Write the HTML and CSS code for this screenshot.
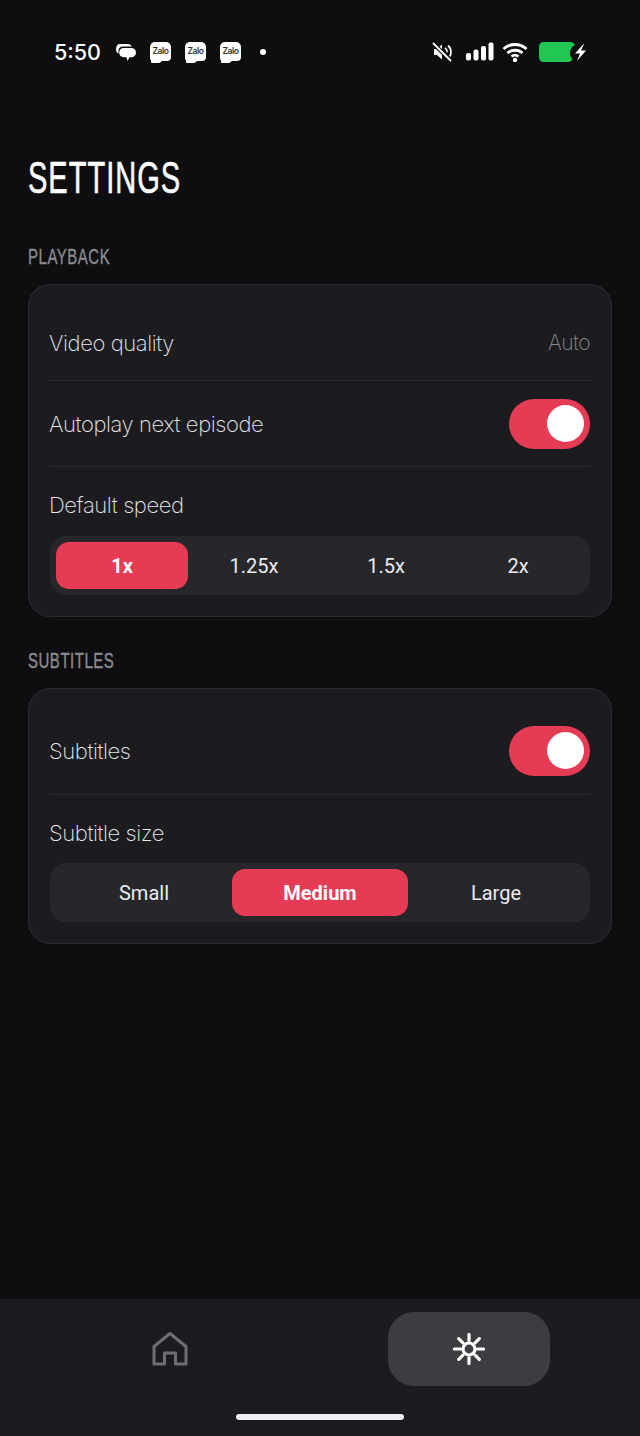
FILE: index.html
```html
<!DOCTYPE html>
<html lang="en">
<head>
    <meta charset="UTF-8">
    <meta name="viewport" content="width=device-width, initial-scale=1.0">
    <title>Settings</title>
    <link rel="stylesheet" href="styles.css">
</head>
<body>
    <div class="status-bar">
        <div class="status-left">
            <span class="clock">5:50</span>
            <svg class="msg-icon" width="22" height="22" viewBox="0 0 22 22">
                <path d="M5 3h7c2.500 0 4 .8 4.800 2.500H8C5 5.500 3.500 7.300 3.500 9.500v3.200C2 11.800 1 10.300 1 8.500 1 5 2.500 3 5 3z" fill="#fff"/>
                <path d="M9 7h7c3 0 5 1.800 5 4.500 0 3-2 4.700-5 4.700h-1.500L12.500 20l-1-3.800H9c-3 0-4.800-1.800-4.800-4.700C4.200 8.800 6 7 9 7z" fill="#fff"/>
            </svg>
            <span class="zalo">Zalo</span>
            <span class="zalo">Zalo</span>
            <span class="zalo">Zalo</span>
            <span class="dot"></span>
        </div>
        <div class="status-right">
            <svg width="22" height="22" viewBox="0 0 22 22">
                <path d="M3 8h3l5-4.500v15L6 14H3z" fill="#fff"/>
                <path d="M14 7c1.500 1 2.300 2.500 2.300 4.200M17 4.500c2 1.700 3 4 3 6.700 0 1.500-.4 3-1.200 4.300" fill="none" stroke="#fff" stroke-width="1.700"/>
                <path d="M2 2l18 18" stroke="#0e0e10" stroke-width="4"/>
                <path d="M2.500 2.500l17 17" stroke="#fff" stroke-width="1.800" stroke-linecap="round"/>
            </svg>
            <svg class="signal" width="28" height="20" viewBox="0 0 28 20">
                <rect x="0" y="11" width="5" height="7.500" rx="2" fill="#fff"/>
                <rect x="7.500" y="7.500" width="5" height="11" rx="2" fill="#fff"/>
                <rect x="15" y="4" width="5" height="14.500" rx="2" fill="#fff"/>
                <rect x="22.500" y="0.500" width="5" height="18" rx="2" fill="#fff"/>
            </svg>
            <svg class="wifi" width="26" height="20" viewBox="0 0 26 20">
                <path d="M1.500 7C8 1 18 1 24.500 7M5.500 11c4.200-3.700 10.800-3.700 15 0M9.500 14.500c2-1.600 5-1.600 7 0" fill="none" stroke="#fff" stroke-width="2.800"/>
                <circle cx="13" cy="18" r="2.200" fill="#fff"/>
            </svg>
            <svg class="battery" width="50" height="24" viewBox="0 0 50 24">
                <path d="M7 2h26c2.800 0 4.800 1.500 5 3-3 1.500-4.500 4-5 7-.4 3 .5 5 2.500 7-1 2-2.500 3-4.500 3H7c-3 0-5-2-5-5V7c0-3 2-5 5-5z" fill="#22c653"/>
                <path d="M47.500 3L38 13.500h5L40 21l9-10.500h-5z" fill="#fff"/>
            </svg>
        </div>
    </div>

    <main class="content">
        <h1>SETTINGS</h1>

        <h2 class="section-title">PLAYBACK</h2>
        <section class="card">
            <div class="row row-quality">
                <span class="row-label">Video quality</span>
                <span class="row-value">Auto</span>
            </div>
            <div class="row row-autoplay">
                <span class="row-label">Autoplay next episode</span>
                <span class="toggle"><span class="knob"></span></span>
            </div>
            <div class="picker">
                <span class="picker-label">Default speed</span>
                <div class="segments">
                    <span class="segment active">1x</span>
                    <span class="segment">1.25x</span>
                    <span class="segment">1.5x</span>
                    <span class="segment">2x</span>
                </div>
            </div>
        </section>

        <h2 class="section-title">SUBTITLES</h2>
        <section class="card">
            <div class="row row-subtitles">
                <span class="row-label">Subtitles</span>
                <span class="toggle"><span class="knob"></span></span>
            </div>
            <div class="picker">
                <span class="picker-label">Subtitle size</span>
                <div class="segments">
                    <span class="segment">Small</span>
                    <span class="segment active">Medium</span>
                    <span class="segment">Large</span>
                </div>
            </div>
        </section>
    </main>

    <nav class="tab-bar">
        <div class="tabs">
            <div class="tab">
                <svg width="38" height="36" viewBox="0 0 38 36">
                    <path d="M3 15.500L19 2.500l16 13V33H24.500V22h-11v11H3z" fill="none" stroke="#6e6e72" stroke-width="3" stroke-linejoin="round"/>
                </svg>
            </div>
            <div class="tab tab-active">
                <svg class="sun" width="32" height="32" viewBox="0 0 32 32">
                    <circle cx="16" cy="16" r="6" fill="none" stroke="#fff" stroke-width="3.200"/>
                    <path d="M16 1.500v6M16 24.500v6M1.500 16h6M24.500 16h6M5.700 5.700l4.200 4.200M22.100 22.100l4.200 4.200M5.700 26.300l4.200-4.200M22.100 9.900l4.200-4.200" stroke="#fff" stroke-width="3.200" stroke-linecap="round"/>
                </svg>
            </div>
        </div>
        <div class="home-indicator"></div>
    </nav>
</body>
</html>
```

FILE: styles.css
```css
* {
    box-sizing: border-box;
}

body {
    margin: 0;
    height: 1436px;
    display: flex;
    flex-direction: column;
    background-color: #0e0e10;
    color: #fff;
    font-family: 'Inter', sans-serif;
    overflow: hidden;
}

/* status bar */
.status-bar {
    height: 104px;
    padding: 0 54px 0 54px;
    display: flex;
    justify-content: space-between;
    align-items: center;
}

.status-left {
    display: flex;
    align-items: center;
}

.clock {
    font-size: 21.500px;
    font-weight: 500;
    width: 61px;
}

.msg-icon {
    margin-right: 13px;
}

.zalo {
    position: relative;
    width: 21px;
    height: 19px;
    margin-right: 14px;
    margin-top: -2px;
    border-radius: 5px 5px 4px 3px;
    background: #fff;
    color: #333;
    font-size: 8.500px;
    font-weight: 600;
    line-height: 18px;
    text-align: center;
    letter-spacing: -0.4px;
}

/* speech tail under each app badge */
.zalo::after {
    content: "";
    position: absolute;
    left: 1px;
    bottom: -2px;
    width: 11px;
    height: 4px;
    border-radius: 0 0 8px 2px;
    background: #fff;
}

.dot {
    width: 6px;
    height: 6px;
    margin-left: 5px;
    border-radius: 50%;
    background: #fff;
}

.status-right {
    display: flex;
    align-items: center;
}

.signal {
    margin-left: 13px;
}

.wifi {
    margin-left: 8px;
}

.battery {
    margin-left: 9px;
    margin-right: -1px;
}

/* page content */
.content {
    flex: 1;
    padding: 0 28px;
}

/* squeezed to the condensed look of the headings */
h1 {
    margin: 48px 0 0;
    font-family: 'Liberation Sans', sans-serif;
    font-size: 44px;
    font-weight: 400;
    line-height: 52px;
    letter-spacing: 1.5px;
    -webkit-text-stroke: 0.6px #fff;
    transform: scaleX(0.66);
    transform-origin: left center;
}

.section-title {
    margin: 0 0 15px;
    height: 24px;
    font-family: 'Liberation Sans', sans-serif;
    font-size: 22px;
    font-weight: 400;
    line-height: 24px;
    letter-spacing: 0.8px;
    color: #8b8b8f;
    -webkit-text-stroke: 0.4px #8b8b8f;
    transform: scaleX(0.68);
    transform-origin: left center;
}

h1 + .section-title {
    margin-top: 41px;
}

.card {
    margin-bottom: 32px;
    padding: 0 21px 21px;
    border: 1px solid #2c2c30;
    border-radius: 22px;
    background: #1c1c20;
}

.row {
    display: flex;
    justify-content: space-between;
    align-items: center;
    border-bottom: 1px solid #2c2c30;
    font-size: 22px;
    font-weight: 250;
    letter-spacing: -0.4px;
    color: #e8e8ea;
}

.row-label {
    margin-left: -1px;
}

.row-quality {
    height: 96px;
    padding-top: 20px;
}

.row-autoplay {
    height: 86px;
}

.row-subtitles {
    height: 106px;
    padding-top: 19px;
}

.row-value {
    font-size: 21px;
    font-weight: 200;
    letter-spacing: -0.5px;
    color: #8a8a8e;
}

.toggle {
    width: 81px;
    height: 50px;
    padding: 6px 6px 6px 0;
    display: flex;
    justify-content: flex-end;
    border-radius: 25px;
    background: #e63b54;
}

.knob {
    width: 37px;
    height: 37px;
    border-radius: 50%;
    background: #fff;
}

.picker {
    padding-top: 22px;
}

.picker-label {
    display: block;
    height: 47px;
    margin-left: -1px;
    font-size: 22px;
    font-weight: 250;
    line-height: 32px;
    letter-spacing: -0.4px;
    color: #e8e8ea;
}

.row-subtitles + .picker .picker-label {
    height: 46px;
}

.segments {
    height: 59px;
    padding: 6px;
    display: flex;
    border-radius: 16px;
    background: #26262b;
}

.segment {
    flex: 1;
    display: flex;
    justify-content: center;
    align-items: center;
    border-radius: 13px;
    font-family: 'Roboto', sans-serif;
    font-size: 20px;
    color: #ececee;
}

.segment.active {
    background: #e63b54;
    font-weight: 700;
    color: #fff;
}

/* bottom navigation */
.tab-bar {
    height: 137px;
    padding-top: 13px;
    background: #1c1c20;
}

.tabs {
    height: 74px;
    padding-left: 89px;
    display: flex;
    gap: 137px;
}

.tab {
    width: 162px;
    display: flex;
    justify-content: center;
    align-items: center;
    border-radius: 26px;
}

.tab-active {
    background: #3c3c41;
}

.sun {
    margin-left: -1px;
}

.home-indicator {
    width: 168px;
    height: 6px;
    margin: 28px auto 0;
    border-radius: 3px;
    background: #efeff1;
}
```
